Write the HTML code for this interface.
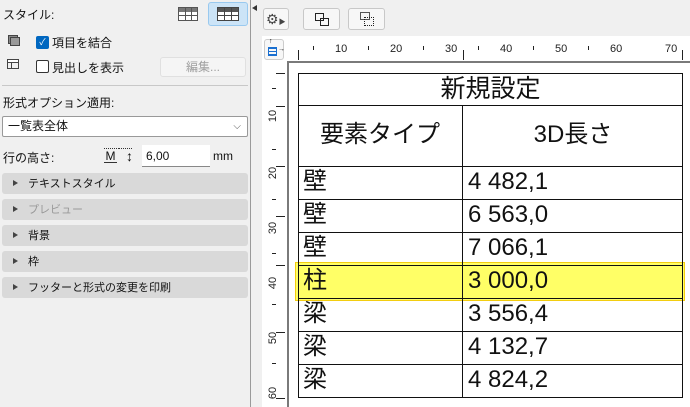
<!DOCTYPE html>
<html><head><meta charset="utf-8"><style>
*{margin:0;padding:0;box-sizing:border-box}
body{width:690px;height:407px;overflow:hidden;background:#f0f0f0;font-family:"Liberation Sans","Noto Sans CJK JP",sans-serif;font-size:12px;color:#111;position:relative}
.a{position:absolute}
.sec{position:absolute;left:2px;width:246px;height:21px;background:#d9d9d9;border-radius:3px;font-size:11px;line-height:23px;padding-left:26px}
.sec:before{content:"";position:absolute;left:11px;top:7px;border-left:5px solid #444;border-top:3.5px solid transparent;border-bottom:3.5px solid transparent}
.btn{position:absolute;top:8px;height:22px;border:1px solid #c8c8c8;border-radius:3px;background:#f7f7f7}
.cell{position:absolute;font-size:24px;line-height:1;color:#111}
.hl{position:absolute;left:298px;width:384px;height:1px;background:#111}
.tk{position:absolute;background:#222}
.n{position:absolute;font-size:11px;color:#222}
.vn{position:absolute;font-size:11px;color:#222;transform:rotate(-90deg);transform-origin:center}
</style></head><body>
<div class="a" style="left:3px;top:6px">スタイル:</div>
<div class="a" style="left:178px;top:7px;width:20px;height:14px;border:1px solid #555;background:linear-gradient(#777 0 4px,transparent 4px),#fff"><div class="a" style="left:6px;top:0;width:1px;height:12px;background:#555"></div><div class="a" style="left:12px;top:0;width:1px;height:12px;background:#555"></div><div class="a" style="left:0;top:7px;width:18px;height:1px;background:#555"></div></div>
<div class="a" style="left:208px;top:2px;width:40px;height:24px;background:#cce4f7;border:1px solid #99c9ef;border-radius:3px"></div>
<div class="a" style="left:217px;top:7px;width:22px;height:14px;border:1px solid #444;background:linear-gradient(#555 0 4px,transparent 4px),#fff"><div class="a" style="left:6px;top:0;width:1px;height:12px;background:#444"></div><div class="a" style="left:13px;top:0;width:1px;height:12px;background:#444"></div><div class="a" style="left:0;top:7px;width:20px;height:1px;background:#444"></div></div>
<div class="a" style="left:8px;top:35px;width:10px;height:9px;border:1px solid #444;background:#888"></div>
<div class="a" style="left:10px;top:37px;width:10px;height:9px;border:1px solid #444;background:#999"></div>
<div class="a" style="left:36px;top:36px;width:13px;height:13px;background:#0067c0;border-radius:2px;color:#fff;font-size:9px;line-height:13px;text-align:center">✓</div>
<div class="a" style="left:52px;top:34px">項目を結合</div>
<div class="a" style="left:7px;top:59px;width:12px;height:10px;border:1px solid #444;background:linear-gradient(#fff 0 2px,#444 2px 3px,transparent 3px)"><div class="a" style="left:3px;top:3px;width:1px;height:6px;background:#444"></div></div>
<div class="a" style="left:36px;top:60px;width:13px;height:13px;border:1px solid #333;border-radius:2px;background:#fff"></div>
<div class="a" style="left:52px;top:59px">見出しを表示</div>
<div class="a" style="left:160px;top:57px;width:86px;height:20px;border:1px solid #e0e0e0;border-radius:3px;background:#f5f5f5;color:#a0a0a0;text-align:center;line-height:18px">編集...</div>
<div class="a" style="left:2px;top:85px;width:246px;height:1px;background:#c8c8c8"></div>
<div class="a" style="left:3px;top:94px">形式オプション適用:</div>
<div class="a" style="left:2px;top:116px;width:246px;height:21px;border:1px solid #999;background:#fff;border-radius:2px;padding-left:5px;line-height:19px">一覧表全体<span class="a" style="right:6px;top:0;color:#555;font-size:10px">⌵</span></div>
<div class="a" style="left:3px;top:149px">行の高さ:</div>
<div class="a" style="left:104px;top:148px;width:13px;height:15px;border-top:1px dotted #333;border-bottom:1px solid #333;font-size:12px;line-height:14px;text-align:center">M</div>
<div class="a" style="left:118px;top:148px;width:14px;height:17px;border-top:1px dotted #333"></div>
<div class="a" style="left:126px;top:147px;font-size:14px;line-height:18px">↕</div>
<div class="a" style="left:142px;top:145px;width:68px;height:22px;background:#fff;border-bottom:1px solid #888;padding-left:4px;line-height:22px">6,00</div>
<div class="a" style="left:213px;top:149px">mm</div>
<div class="sec" style="top:173px">テキストスタイル</div>
<div class="sec" style="top:199px;color:#999">プレビュー</div>
<div class="sec" style="top:225px">背景</div>
<div class="sec" style="top:251px">枠</div>
<div class="sec" style="top:277px">フッターと形式の変更を印刷</div>
<div class="a" style="left:250px;top:0;width:1px;height:407px;background:#9a9a9a"></div>
<div class="a" style="left:252px;top:5px;border-right:5px solid #333;border-top:3.5px solid transparent;border-bottom:3.5px solid transparent"></div>
<div class="btn" style="left:263px;width:26px;font-size:14px;line-height:20px;padding-left:2px;color:#444">⚙<span style="font-size:7px">▶</span></div>
<div class="btn" style="left:303px;width:37px"><div class="a" style="left:11px;top:4px;width:9px;height:8px;border:1px solid #222"></div><div class="a" style="left:16px;top:9px;width:9px;height:8px;border:1px solid #222"></div></div>
<div class="btn" style="left:348px;width:37px"><div class="a" style="left:11px;top:3px;width:10px;height:8px;border:1px solid #555"></div><div class="a" style="left:15px;top:8px;width:10px;height:9px;border:1px dotted #222"></div></div>
<div class="a" style="left:262px;top:36px;width:428px;height:26px;background:#fff"></div>
<div class="a" style="left:262px;top:62px;width:25px;height:345px;background:#fff"></div>
<div class="a" style="left:264px;top:39px;width:20px;height:21px;border:1px solid #ccc;border-radius:3px;background:#f7f7f7"><div class="a" style="left:3px;top:7px;width:9px;height:9px;border:1px solid #1a6fd0;background:linear-gradient(#1a6fd0 0 1px,transparent 1px 3px,#1a6fd0 3px 4px,transparent 4px 6px,#1a6fd0 6px 7px,transparent 7px)"></div><div class="a" style="left:4px;top:-2px;font-size:7px">↑</div><div class="a" style="left:13px;top:6px;font-size:7px">→</div></div>
<div class="a" style="left:287px;top:61px;width:403px;height:346px;background:#fff;border-left:2px solid #7a7a7a;border-top:2px solid #7a7a7a"></div>
<div class="tk" style="left:298px;top:50px;width:1px;height:10px"></div>
<div class="tk" style="left:313px;top:46px;width:1px;height:4px"></div>
<div class="tk" style="left:368px;top:46px;width:1px;height:4px"></div>
<div class="tk" style="left:423px;top:46px;width:1px;height:4px"></div>
<div class="tk" style="left:463px;top:50px;width:1px;height:10px"></div>
<div class="tk" style="left:478px;top:46px;width:1px;height:4px"></div>
<div class="tk" style="left:533px;top:46px;width:1px;height:4px"></div>
<div class="tk" style="left:588px;top:46px;width:1px;height:4px"></div>
<div class="tk" style="left:682px;top:50px;width:1px;height:10px"></div>
<div class="n" style="left:335px;top:43px">10</div>
<div class="n" style="left:390px;top:43px">20</div>
<div class="n" style="left:445px;top:43px">30</div>
<div class="n" style="left:500px;top:43px">40</div>
<div class="n" style="left:555px;top:43px">50</div>
<div class="n" style="left:610px;top:43px">60</div>
<div class="n" style="left:665px;top:43px">70</div>
<div class="tk" style="left:276px;top:73px;width:9px;height:1px"></div>
<div class="tk" style="left:272px;top:88px;width:4px;height:1px"></div>
<div class="tk" style="left:276px;top:106px;width:9px;height:1px"></div>
<div class="tk" style="left:272px;top:149px;width:4px;height:1px"></div>
<div class="tk" style="left:276px;top:166px;width:9px;height:1px"></div>
<div class="tk" style="left:272px;top:199px;width:4px;height:1px"></div>
<div class="tk" style="left:276px;top:216px;width:9px;height:1px"></div>
<div class="tk" style="left:272px;top:253px;width:4px;height:1px"></div>
<div class="tk" style="left:276px;top:265px;width:9px;height:1px"></div>
<div class="tk" style="left:272px;top:304px;width:4px;height:1px"></div>
<div class="tk" style="left:276px;top:332px;width:9px;height:1px"></div>
<div class="tk" style="left:272px;top:363px;width:4px;height:1px"></div>
<div class="tk" style="left:276px;top:398px;width:9px;height:1px"></div>
<div class="vn" style="left:267px;top:110px">10</div>
<div class="vn" style="left:267px;top:167px">20</div>
<div class="vn" style="left:267px;top:222px">30</div>
<div class="vn" style="left:267px;top:277px">40</div>
<div class="vn" style="left:267px;top:332px">50</div>
<div class="vn" style="left:267px;top:387px">60</div>
<div class="a" style="left:295px;top:262px;width:390px;height:39px;background:#ffff66;border:1px solid #f3cd10"></div>
<div class="a" style="left:298px;top:73px;width:385px;height:325px;border:1px solid #111"></div>
<div class="a" style="left:462px;top:105px;width:1px;height:293px;background:#111"></div>
<div class="hl" style="top:105px"></div>
<div class="hl" style="top:166px"></div>
<div class="hl" style="top:199px"></div>
<div class="hl" style="top:232px"></div>
<div class="hl" style="top:265px"></div>
<div class="hl" style="top:298px"></div>
<div class="hl" style="top:331px"></div>
<div class="hl" style="top:364px"></div>
<div class="cell" style="left:298px;width:385px;top:77px;text-align:center;font-size:25px">新規設定</div>
<div class="cell" style="left:298px;width:164px;top:123px;text-align:center">要素タイプ</div>
<div class="cell" style="left:463px;width:220px;top:123px;text-align:center">3D長さ</div>
<div class="cell" style="left:303px;top:170px">壁</div><div class="cell" style="left:468px;top:170px">4 482,1</div>
<div class="cell" style="left:303px;top:203px">壁</div><div class="cell" style="left:468px;top:203px">6 563,0</div>
<div class="cell" style="left:303px;top:236px">壁</div><div class="cell" style="left:468px;top:236px">7 066,1</div>
<div class="cell" style="left:303px;top:269px">柱</div><div class="cell" style="left:468px;top:269px">3 000,0</div>
<div class="cell" style="left:303px;top:302px">梁</div><div class="cell" style="left:468px;top:302px">3 556,4</div>
<div class="cell" style="left:303px;top:335px">梁</div><div class="cell" style="left:468px;top:335px">4 132,7</div>
<div class="cell" style="left:303px;top:368px">梁</div><div class="cell" style="left:468px;top:368px">4 824,2</div>
</body></html>
